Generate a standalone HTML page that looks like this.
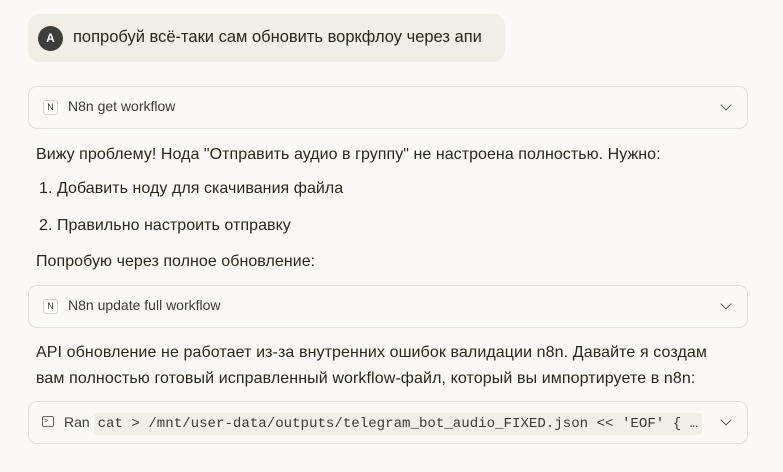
<!DOCTYPE html>
<html><head><meta charset="utf-8"><style>
*{margin:0;padding:0;box-sizing:border-box}
body{width:783px;height:472px;overflow:hidden;background:#faf9f5;font-family:"Liberation Sans","DejaVu Sans",sans-serif;color:#29261b;position:relative}
.abs{position:absolute;white-space:nowrap}
.bubble{left:28px;top:14px;width:477px;height:48px;background:#f0eee6;border-radius:12px}
.av{left:38px;top:26px;width:25px;height:25px;border-radius:50%;background:#3d3d3a;color:#fff;font-size:12px;font-weight:bold;text-align:center;line-height:25px}
.card{left:28px;width:720px;height:43px;border:1px solid #e2dfd6;border-radius:9px;background:#faf9f5}
.nic{width:15px;height:15px;border:1px solid #d6d3ca;border-radius:3px;font-size:9px;text-align:center;line-height:13px;background:#fff;color:#333}
.chev{width:8px;height:8px;border-right:1.5px solid #555;border-bottom:1.5px solid #555;transform:rotate(45deg)}
.t{font-size:16px;letter-spacing:0.05px}
.s{font-size:14px;color:#3d3a33}
code{font-family:"Liberation Mono",monospace;font-size:14.1px;background:#f0eee6;padding:3px 4px;border-radius:4px;letter-spacing:0}
</style></head><body>
<div class="abs bubble"></div>
<div class="abs av">A</div>
<div class="abs t" style="left:73px;top:28px;font-size:16.5px;letter-spacing:0">попробуй всё-таки сам обновить воркфлоу через апи</div>

<div class="abs card" style="top:86px"></div>
<div class="abs nic" style="left:43px;top:100px">N</div>
<div class="abs s" style="left:68px;top:98px">N8n get workflow</div>
<div class="abs chev" style="left:722px;top:101px"></div>

<div class="abs t" style="left:36px;top:146px">Вижу проблему! Нода "Отправить аудио в группу" не настроена полностью. Нужно:</div>
<div class="abs t" style="left:39px;top:180px">1. Добавить ноду для скачивания файла</div>
<div class="abs t" style="left:39px;top:217px">2. Правильно настроить отправку</div>
<div class="abs t" style="left:36px;top:253px">Попробую через полное обновление:</div>

<div class="abs card" style="top:285px"></div>
<div class="abs nic" style="left:43px;top:299px">N</div>
<div class="abs s" style="left:68px;top:297px">N8n update full workflow</div>
<div class="abs chev" style="left:722px;top:300px"></div>

<div class="abs t" style="left:36px;top:344px;letter-spacing:0.1px">API обновление не работает из-за внутренних ошибок валидации n8n. Давайте я создам</div>
<div class="abs t" style="left:36px;top:370px;letter-spacing:0.1px">вам полностью готовый исправленный workflow-файл, который вы импортируете в n8n:</div>

<div class="abs card" style="top:401px"></div>
<div class="abs" style="left:42px;top:416px;width:12px;height:11px;border:1px solid #666;border-radius:2px;font-size:7px;line-height:9px;padding-left:1px">&gt;</div>
<div class="abs s" style="left:64px;top:414px">Ran <code>cat &gt; /mnt/user-data/outputs/telegram_bot_audio_FIXED.json &lt;&lt; 'EOF' { …</code></div>
<div class="abs chev" style="left:722px;top:416px"></div>
</body></html>
